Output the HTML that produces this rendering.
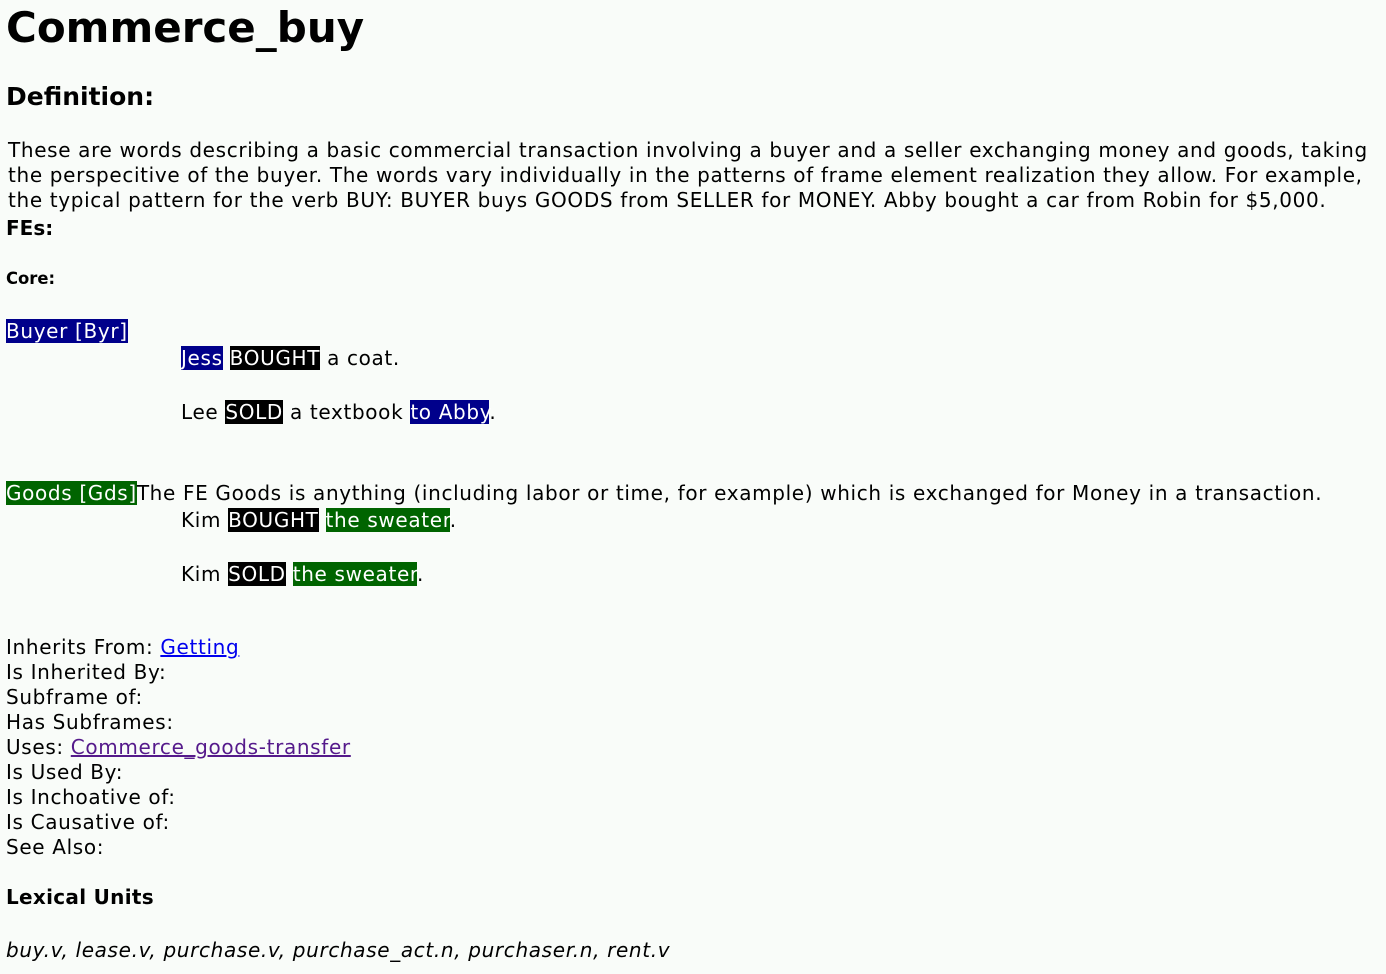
<!DOCTYPE html>
<html><head><meta charset="utf-8"><style>
body{margin:0;background:#f9fcf9;font-family:"DejaVu Sans","Liberation Sans",sans-serif;color:#000;width:1386px;height:974px;overflow:hidden;position:relative}
.l{position:absolute;left:6px;font-size:20px;line-height:25px;white-space:nowrap;letter-spacing:0.65px}
.b{font-weight:bold;letter-spacing:0.3px}
.ex{left:181px}
.byr{background:#00008b;color:#fff}
.gds{background:#006400;color:#fff}
.tg{background:#000;color:#fff}
a{color:#0000ee}
a.v{color:#551a8b}
</style></head><body>
<div class="l b" style="top:3px;font-size:42px;line-height:50px;letter-spacing:0">Commerce_buy</div>
<div class="l b" style="top:82px;font-size:25px;line-height:30px;letter-spacing:0">Definition:</div>
<div class="l" style="left:8px;top:138px">These are words describing a basic commercial transaction involving a buyer and a seller exchanging money and goods, taking</div>
<div class="l" style="left:8px;top:163px">the perspecitive of the buyer. The words vary individually in the patterns of frame element realization they allow. For example,</div>
<div class="l" style="left:8px;top:188px">the typical pattern for the verb BUY: BUYER buys GOODS from SELLER for MONEY. Abby bought a car from Robin for $5,000.</div>
<div class="l b" style="top:216px;font-size:20px;letter-spacing:0">FEs:</div>
<div class="l b" style="top:266px;font-size:16.4px;letter-spacing:0">Core:</div>
<div class="l" style="top:319px"><span class="byr">Buyer [Byr]</span></div>
<div class="l ex" style="top:346px"><span class="byr">Jess</span> <span class="tg">BOUGHT</span> a coat.</div>
<div class="l ex" style="top:400px">Lee <span class="tg">SOLD</span> a textbook <span class="byr">to Abby</span>.</div>
<div class="l" style="top:481px"><span class="gds">Goods [Gds]</span>The FE Goods is anything (including labor or time, for example) which is exchanged for Money in a transaction.</div>
<div class="l ex" style="top:508px">Kim <span class="tg">BOUGHT</span> <span class="gds">the sweater</span>.</div>
<div class="l ex" style="top:562px">Kim <span class="tg">SOLD</span> <span class="gds">the sweater</span>.</div>
<div class="l" style="top:635px">Inherits From: <a href="#">Getting</a></div>
<div class="l" style="top:660px">Is Inherited By:</div>
<div class="l" style="top:685px">Subframe of:</div>
<div class="l" style="top:710px">Has Subframes:</div>
<div class="l" style="top:735px">Uses: <a class="v" href="#">Commerce_goods-transfer</a></div>
<div class="l" style="top:760px">Is Used By:</div>
<div class="l" style="top:785px">Is Inchoative of:</div>
<div class="l" style="top:810px">Is Causative of:</div>
<div class="l" style="top:835px">See Also:</div>
<div class="l b" style="top:885px;font-size:20px">Lexical Units</div>
<div class="l" style="top:938px;font-style:italic">buy.v, lease.v, purchase.v, purchase_act.n, purchaser.n, rent.v</div>
</body></html>
